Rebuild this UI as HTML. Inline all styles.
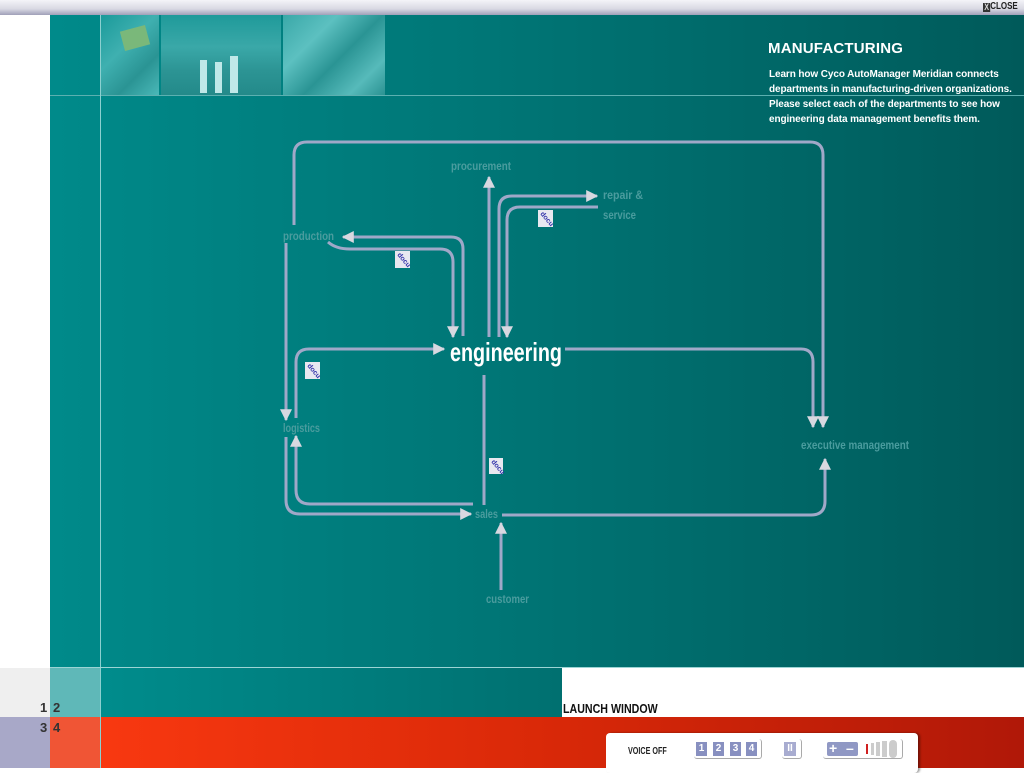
<!DOCTYPE html>
<html><head><meta charset="utf-8"><style>
*{margin:0;padding:0;box-sizing:border-box}
body{width:1024px;height:768px;overflow:hidden;position:relative;font-family:"Liberation Sans",sans-serif;background:#fff}
.abs{position:absolute}
.cond{font-family:"Liberation Sans Narrow","Liberation Sans",sans-serif;font-weight:bold}
.sx{transform-origin:0 0;white-space:nowrap}
</style></head><body>
<div class="abs" style="left:0;top:0;width:1024px;height:15px;background:linear-gradient(#f4f4f8,#d8d8e2 60%,#a0a0b8)"></div>
<div class="abs cond sx" style="left:983px;top:1px;font-size:10px;color:#222;transform:scaleX(.8)"><span style="display:inline-block;width:9px;height:9px;background:#333;color:#ddd;font-size:9px;line-height:9px;text-align:center;vertical-align:-1px">X</span>CLOSE</div>
<div class="abs" style="left:0;top:15px;width:50px;height:653px;background:#fff"></div>
<div class="abs" style="left:50px;top:15px;width:974px;height:653px;background:linear-gradient(90deg,#008a8a 0%,#007676 45%,#005a5a 100%)"></div>
<!-- photos -->
<div class="abs" style="left:101px;top:15px;width:58px;height:80px;background:linear-gradient(135deg,#1a9a9a,#3fb0b0 40%,#2a9494 70%,#4ab8b8)"></div>
<div class="abs" style="left:122px;top:28px;width:26px;height:20px;background:#7ab87a;transform:rotate(-15deg)"></div>
<div class="abs" style="left:161px;top:15px;width:120px;height:80px;background:linear-gradient(#1f9a9a,#3aa8a8 40%,#2c9494 70%,#238a8a)"></div>
<div class="abs" style="left:200px;top:60px;width:7px;height:33px;background:#bfe8e8"></div>
<div class="abs" style="left:215px;top:62px;width:7px;height:31px;background:#bfe8e8"></div>
<div class="abs" style="left:230px;top:56px;width:8px;height:37px;background:#bfe8e8"></div>
<div class="abs" style="left:283px;top:15px;width:102px;height:80px;background:linear-gradient(135deg,#3aa8a8,#5cc0c0 30%,#2a9494 55%,#56baba 80%,#2a9292)"></div>
<div class="abs" style="left:50px;top:95px;width:974px;height:1px;background:#5cb0b0"></div>
<div class="abs" style="left:100px;top:15px;width:1px;height:753px;background:#8cd0d0"></div>
<div class="abs" style="left:768px;top:40px;color:#fff;font-weight:bold;font-size:15px;letter-spacing:0.2px">MANUFACTURING</div>
<div class="abs" style="left:769px;top:67px;color:#fff;font-weight:bold;font-size:10px;line-height:15px;width:260px;letter-spacing:-0.1px">Learn how Cyco AutoManager Meridian connects departments in manufacturing-driven organizations. Please select each of the departments to see how engineering data management benefits them.</div>
<svg class="abs" style="left:0;top:0" width="1024" height="668">
<defs><marker id="a" viewBox="0 0 10 10" refX="9" refY="5" markerWidth="4" markerHeight="4" orient="auto" markerUnits="strokeWidth"><path d="M0 0L10 5L0 10z" fill="#d8d8e0"/></marker></defs>
<g fill="none" stroke="#a0a8c8" stroke-width="3">
<path d="M294 225V155Q294 142 307 142H810Q823 142 823 155V427" marker-end="url(#a)"/>
<path d="M286 243V420" marker-end="url(#a)"/>
<path d="M463 336V249Q463 237 451 237H343" marker-end="url(#a)"/>
<path d="M328 242Q336 249 350 249H440Q453 249 453 262V337" marker-end="url(#a)"/>
<path d="M489 337V177" marker-end="url(#a)"/>
<path d="M499 337V209Q499 196 512 196H597" marker-end="url(#a)"/>
<path d="M598 207H520Q507 207 507 220V337" marker-end="url(#a)"/>
<path d="M296 418V362Q296 349 309 349H444" marker-end="url(#a)"/>
<path d="M565 349H801Q813 349 813 362V427" marker-end="url(#a)"/>
<path d="M473 504H310Q296 504 296 490V436" marker-end="url(#a)"/>
<path d="M286 437V500Q286 514 300 514H471" marker-end="url(#a)"/>
<path d="M484 375V505"/>
<path d="M502 515H811Q825 515 825 501V459" marker-end="url(#a)"/>
<path d="M501 590V523" marker-end="url(#a)"/>
</g>
<g class="cond" fill="#4a9c9e" font-size="12">
<text x="451" y="170" textLength="60" lengthAdjust="spacingAndGlyphs">procurement</text>
<text x="603" y="199" textLength="40" lengthAdjust="spacingAndGlyphs">repair &amp;</text>
<text x="603" y="219" textLength="33" lengthAdjust="spacingAndGlyphs">service</text>
<text x="283" y="240" textLength="51" lengthAdjust="spacingAndGlyphs">production</text>
<text x="283" y="432" textLength="37" lengthAdjust="spacingAndGlyphs">logistics</text>
<text x="801" y="449" textLength="108" lengthAdjust="spacingAndGlyphs">executive management</text>
<text x="475" y="518" textLength="23" lengthAdjust="spacingAndGlyphs">sales</text>
<text x="486" y="603" textLength="43" lengthAdjust="spacingAndGlyphs">customer</text>
</g>
<text x="450" y="361" class="cond" fill="#fff" font-size="26" textLength="112" lengthAdjust="spacingAndGlyphs">engineering</text>
<g font-size="7" fill="#33a" font-weight="bold">
<g transform="translate(395,251)"><rect width="15" height="17" fill="#e8e8f0"/><text x="2" y="4" transform="rotate(50 2 4)">docu</text></g>
<g transform="translate(538,210)"><rect width="15" height="17" fill="#e8e8f0"/><text x="2" y="4" transform="rotate(50 2 4)">docu</text></g>
<g transform="translate(305,362)"><rect width="15" height="17" fill="#e8e8f0"/><text x="2" y="4" transform="rotate(50 2 4)">docu</text></g>
<g transform="translate(489,458)"><rect width="14" height="16" fill="#e8e8f0"/><text x="2" y="4" transform="rotate(50 2 4)">docu</text></g>
</g>
</svg>
<!-- bottom -->
<div class="abs" style="left:0;top:668px;width:50px;height:49px;background:#efefef"></div>
<div class="abs" style="left:50px;top:668px;width:50px;height:49px;background:#5fb8b8"></div>
<div class="abs" style="left:101px;top:668px;width:461px;height:49px;background:linear-gradient(90deg,#008c8c,#007070)"></div>
<div class="abs" style="left:50px;top:667px;width:974px;height:1px;background:#9cd4d4"></div>
<div class="abs cond sx" style="left:563px;top:701px;font-size:13px;color:#111;transform:scaleX(.82)">LAUNCH WINDOW</div>
<div class="abs" style="left:0;top:717px;width:50px;height:51px;background:#a8a8c8"></div>
<div class="abs" style="left:50px;top:717px;width:50px;height:51px;background:#f05535"></div>
<div class="abs" style="left:101px;top:717px;width:923px;height:51px;background:linear-gradient(90deg,#f83810,#d82808 50%,#b01808)"></div>
<div class="abs cond" style="left:40px;top:700px;font-size:13px;color:#333">1</div>
<div class="abs cond" style="left:53px;top:700px;font-size:13px;color:#333">2</div>
<div class="abs cond" style="left:40px;top:720px;font-size:13px;color:#333">3</div>
<div class="abs cond" style="left:53px;top:720px;font-size:13px;color:#333">4</div>
<div class="abs" style="left:606px;top:733px;width:312px;height:40px;background:#fff;border-radius:4px;box-shadow:2px 0 2px rgba(0,0,0,.4)"></div>
<div class="abs cond sx" style="left:628px;top:746px;font-size:10px;color:#222;transform:scaleX(.72)">VOICE OFF</div>
<div class="abs" style="left:694px;top:739px;width:68px;height:20px;border-right:1px solid #aaa;border-bottom:1px solid #aaa;border-radius:3px"></div>
<div class="abs" style="left:782px;top:739px;width:20px;height:20px;border-right:1px solid #aaa;border-bottom:1px solid #aaa;border-radius:3px"></div>
<div class="abs" style="left:823px;top:739px;width:80px;height:20px;border-right:1px solid #aaa;border-bottom:1px solid #aaa;border-radius:3px"></div>
<div class="abs cond" style="left:696px;top:742px;width:11px;height:14px;background:#8890c0;color:#fff;font-size:10px;text-align:center;line-height:14px">1</div>
<div class="abs cond" style="left:713px;top:742px;width:11px;height:14px;background:#8890c0;color:#fff;font-size:10px;text-align:center;line-height:14px">2</div>
<div class="abs cond" style="left:730px;top:742px;width:11px;height:14px;background:#8890c0;color:#fff;font-size:10px;text-align:center;line-height:14px">3</div>
<div class="abs cond" style="left:746px;top:742px;width:11px;height:14px;background:#8890c0;color:#fff;font-size:10px;text-align:center;line-height:14px">4</div>
<div class="abs cond" style="left:784px;top:742px;width:12px;height:14px;background:#a8acd0;color:#fff;font-size:10px;text-align:center;line-height:14px">II</div>
<div class="abs" style="left:827px;top:742px;width:31px;height:14px;background:#9098c4;border-radius:2px;color:#fff;font-weight:bold;font-size:14px;line-height:13px"><span style="position:absolute;left:2px">+</span><span style="position:absolute;left:19px">–</span></div>
<div class="abs" style="left:866px;top:744px;width:2px;height:10px;background:#d02020"></div>
<div class="abs" style="left:871px;top:743px;width:3px;height:12px;background:#ccc"></div>
<div class="abs" style="left:876px;top:742px;width:4px;height:14px;background:#ccc"></div>
<div class="abs" style="left:882px;top:741px;width:5px;height:16px;background:#ccc"></div>
<div class="abs" style="left:889px;top:740px;width:8px;height:18px;background:#ccc;border-radius:4px"></div>
</body></html>
